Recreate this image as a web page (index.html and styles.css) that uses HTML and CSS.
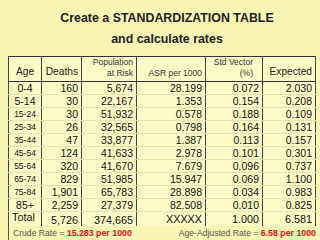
FILE: index.html
```html
<!DOCTYPE html>
<html>
<head>
<meta charset="utf-8">
<link rel="stylesheet" href="styles.css">
</head>
<body>
<div class="page">
  <div class="title">
    <div>Create a STANDARDIZATION TABLE</div>
    <div>and calculate rates</div>
  </div>
  <table class="grid">
    <colgroup>
      <col class="c1"><col class="c2"><col class="c3"><col class="c4"><col class="c5"><col class="c6">
    </colgroup>
    <thead>
      <tr>
        <th class="age big">Age</th>
        <th class="big">Deaths</th>
        <th class="small">Population<br>at Risk</th>
        <th class="small">ASR per 1000</th>
        <th class="small std">Std Vector<br>(%)</th>
        <th class="big">Expected</th>
      </tr>
    </thead>
    <tbody>
      <tr><td class="age">0-4</td><td>160</td><td>5,674</td><td>28.199</td><td>0.072</td><td>2.030</td></tr>
      <tr><td class="age">5-14</td><td>30</td><td>22,167</td><td>1.353</td><td>0.154</td><td>0.208</td></tr>
      <tr><td class="age sm">15-24</td><td>30</td><td>51,932</td><td>0.578</td><td>0.188</td><td>0.109</td></tr>
      <tr><td class="age sm">25-34</td><td>26</td><td>32,565</td><td>0.798</td><td>0.164</td><td>0.131</td></tr>
      <tr><td class="age sm">35-44</td><td>47</td><td>33,877</td><td>1.387</td><td>0.113</td><td>0.157</td></tr>
      <tr><td class="age sm">45-54</td><td>124</td><td>41,633</td><td>2.978</td><td>0.101</td><td>0.301</td></tr>
      <tr><td class="age sm">55-64</td><td>320</td><td>41,670</td><td>7.679</td><td>0.096</td><td>0.737</td></tr>
      <tr><td class="age sm">65-74</td><td>829</td><td>51,985</td><td>15.947</td><td>0.069</td><td>1.100</td></tr>
      <tr><td class="age sm">75-84</td><td>1,901</td><td>65,783</td><td>28.898</td><td>0.034</td><td>0.983</td></tr>
      <tr><td class="age">85+</td><td>2,259</td><td>27,379</td><td>82.508</td><td>0.010</td><td>0.825</td></tr>
      <tr class="total"><td class="tlabel">Total</td><td class="low">5,726</td><td class="low">374,665</td><td>XXXXX</td><td>1.000</td><td>6.581</td></tr>
    </tbody>
  </table>
  <div class="foot">
    <span class="rate">Crude Rate = <b>15.283 per 1000</b></span>
    <span class="rate">Age-Adjusted Rate = <b>6.58 per 1000</b></span>
  </div>
</div>
</body>
</html>
```
FILE: styles.css
```css
html, body {
  margin: 0;
  padding: 0;
}
body {
  width: 320px;
  height: 240px;
  overflow: hidden;
  background-color: #f8f5b0;
  background-image: repeating-linear-gradient(180deg, rgba(255,255,255,0.18) 0px, rgba(255,255,255,0.18) 1px, rgba(0,0,0,0) 1px, rgba(0,0,0,0) 3px);
  font-family: "Liberation Sans", Arial, sans-serif;
  color: #111;
}
.page {
  display: flex;
  flex-direction: column;
  padding-top: 8px;
}
.title {
  padding-left: 14px;
  text-align: center;
  font-weight: bold;
  font-size: 12.4px;
  line-height: 21px;
  color: #222;
  height: 48px;
}
.grid {
  margin-left: 8px;
  width: 307px;
  table-layout: fixed;
  border-collapse: collapse;
  background: #fcfac6;
  border-top: 1px solid #333;
  border-left: 1px solid #333;
  border-right: 1px solid #333;
}
.c1 { width: 33px; }
.c2 { width: 40px; }
.c3 { width: 55px; }
.c4 { width: 69px; }
.c5 { width: 57px; }
.c6 { width: 53px; }
th, td {
  border-left: 1px solid #444;
  border-right: 1px solid #444;
  padding: 0 3px 0 0;
  text-align: right;
  white-space: nowrap;
}
thead tr {
  height: 24px;
}
th {
  font-weight: normal;
  vertical-align: bottom;
  padding-bottom: 2px;
  border-bottom: 1px solid #333;
  color: #222;
}
th.big {
  font-size: 10.2px;
  line-height: 12px;
  padding-bottom: 3px;
}
th.small {
  font-size: 8.5px;
  line-height: 11px;
  color: #333;
}
th.std {
  padding-right: 9px;
}
th.age, td.age {
  text-align: center;
  padding: 0;
}
th.age { padding-bottom: 3px; }
tbody tr {
  height: 13px;
}
td {
  font-size: 10.5px;
  line-height: 12px;
  border-bottom: 1px solid #e6e3b2;
}
td.sm {
  font-size: 8.5px;
}
tr.total {
  height: 13px;
}
tr.total td {
  font-size: 10.8px;
  border-bottom: none;
}
td.tlabel {
  text-align: left;
  padding-left: 3px;
  vertical-align: top;
  line-height: 10px;
  font-size: 11px;
}
td.low {
  vertical-align: bottom;
  line-height: 11px;
  padding-top: 3px;
}
.foot {
  margin-left: 8px;
  width: 303px;
  height: 14px;
  border-left: 1px solid #555;
  display: flex;
  justify-content: space-between;
  align-items: center;
  padding: 0 0 0 4px;
}
.rate {
  font-size: 8.6px;
  color: #555;
}
.rate b {
  color: #ee0a1e;
  font-size: 8.8px;
}
```
